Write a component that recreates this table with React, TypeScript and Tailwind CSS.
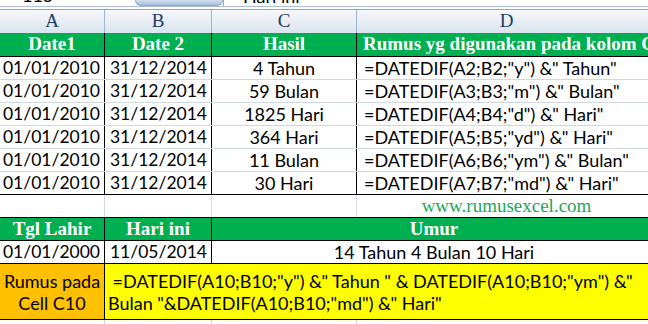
import React from "react";

const sans = "font-['Lato','Open_Sans',sans-serif]";
const serif = "font-['Liberation_Serif','DejaVu_Serif',serif]";

const rows = [
  ["4 Tahun", '=DATEDIF(A2;B2;"y") &" Tahun"'],
  ["59 Bulan", '=DATEDIF(A3;B3;"m") &" Bulan"'],
  ["1825 Hari", '=DATEDIF(A4;B4;"d") &" Hari"'],
  ["364 Hari", '=DATEDIF(A5;B5;"yd") &" Hari"'],
  ["11 Bulan", '=DATEDIF(A6;B6;"ym") &" Bulan"'],
  ["30 Hari", '=DATEDIF(A7;B7;"md") &" Hari"'],
];

export default function App() {
  return (
    <div className="h-[324px] w-[648px] overflow-hidden bg-white text-black">
      {/* formula bar remnant */}
      <div className="relative h-[10px] overflow-hidden">
        <span className={`absolute left-[22px] top-[-18px] text-[18px] ${sans}`}>115</span>
        <div className="absolute left-[135px] top-0 h-[6px] w-[88px] rounded-b-[9px] border border-t-0 border-[#8ea7c8] bg-gradient-to-b from-[#d3dfee] to-[#a9c0de]" />
        <div className="absolute left-[223px] top-0 h-[6px] w-px bg-[#8ea7c8]" />
        <span className={`absolute left-[243px] top-[-17px] text-[18px] ${sans}`}>Hari ini</span>
        <div className="absolute left-0 top-[6px] h-px w-full bg-[#a9bfda]" />
        <div className="absolute left-0 top-[9px] h-px w-full bg-[#8fa7c6]" />
      </div>

      {/* column letters */}
      <div className={`flex h-[23px] bg-gradient-to-b from-[#f6f8fb] to-[#dae3ee] text-[19px] text-[#233d5e] ${serif}`}>
        <div className="flex w-[105px] shrink-0 items-center justify-center border-r border-[#9db4cf]">A</div>
        <div className="flex w-[107px] shrink-0 items-center justify-center border-r border-[#9db4cf]">B</div>
        <div className="flex w-[145px] shrink-0 items-center justify-center border-r border-[#9db4cf]">C</div>
        <div className="flex w-[299px] shrink-0 items-center justify-center">D</div>
      </div>

      {/* table 1 header */}
      <div className={`flex h-[24px] border-b border-black bg-[#00b050] text-[19px] font-bold text-white ${serif}`}>
        <div className="flex w-[105px] shrink-0 items-center justify-center border-r border-black">Date1</div>
        <div className="flex w-[107px] shrink-0 items-center justify-center border-r border-black">Date 2</div>
        <div className="flex w-[145px] shrink-0 items-center justify-center border-r border-black">Hasil</div>
        <div className="flex w-[299px] shrink-0 items-center overflow-hidden whitespace-nowrap pl-[6px]">
          Rumus yg digunakan pada kolom C
        </div>
      </div>

      {rows.map(([hasil, rumus], i) => (
        <div
          key={i}
          className={`flex h-[23px] border-b text-[18px] ${sans} ${i === rows.length - 1 ? "border-black" : "border-[#d0d7e5]"}`}
        >
          <div className="flex w-[105px] shrink-0 items-center justify-end border-r border-black pr-[4px] text-[17.5px]">01/01/2010</div>
          <div className="flex w-[107px] shrink-0 items-center justify-end border-r border-black pr-[4px] text-[17.5px]">31/12/2014</div>
          <div className="flex w-[145px] shrink-0 items-center justify-center border-r border-black">{hasil}</div>
          <div className="flex w-[299px] shrink-0 items-center whitespace-nowrap pl-[7px]">{rumus}</div>
        </div>
      ))}

      {/* blank row with website */}
      <div className="flex h-[23px] border-b border-black">
        <div className="w-[105px] shrink-0 border-r border-[#d0d7e5]" />
        <div className="w-[107px] shrink-0 border-r border-[#d0d7e5]" />
        <div className="w-[145px] shrink-0 border-r border-[#d0d7e5]" />
        <div className={`flex w-[299px] shrink-0 items-center justify-center text-[19px] text-[#1aa85a] ${serif}`}>
          www.rumusexcel.com
        </div>
      </div>

      {/* table 2 header */}
      <div className={`flex h-[23px] border-b border-black bg-[#00b050] text-[19px] font-bold text-white ${serif}`}>
        <div className="flex w-[105px] shrink-0 items-center justify-center border-r border-black">Tgl Lahir</div>
        <div className="flex w-[107px] shrink-0 items-center justify-center border-r border-black">Hari ini</div>
        <div className="flex w-[444px] shrink-0 items-center justify-center">Umur</div>
      </div>

      <div className={`flex h-[23px] border-b border-black text-[18px] ${sans}`}>
        <div className="flex w-[105px] shrink-0 items-center justify-end border-r border-black pr-[4px] text-[17.5px]">01/01/2000</div>
        <div className="flex w-[107px] shrink-0 items-center justify-end border-r border-black pr-[4px] text-[17.5px]">11/05/2014</div>
        <div className="flex w-[444px] shrink-0 items-center justify-center">14 Tahun 4 Bulan 10 Hari</div>
      </div>

      <div className={`flex h-[56px] border-b border-black text-[18px] leading-[22px] ${sans}`}>
        <div className="flex w-[105px] shrink-0 flex-col items-center justify-center border-r border-black bg-[#ffc000]">
          <span>Rumus pada</span>
          <span>Cell C10</span>
        </div>
        <div className="flex w-[551px] shrink-0 flex-col justify-center whitespace-pre bg-[#ffff00] pl-[3px]">
          <span>{' =DATEDIF(A10;B10;"y") &" Tahun " & DATEDIF(A10;B10;"ym") &"'}</span>
          <span>{'Bulan "&DATEDIF(A10;B10;"md") &" Hari"'}</span>
        </div>
      </div>

      <div className="flex h-[10px]">
        <div className="w-[105px] shrink-0 border-r border-[#d0d7e5]" />
        <div className="w-[107px] shrink-0 border-r border-[#d0d7e5]" />
        <div className="w-[145px] shrink-0 border-r border-[#d0d7e5]" />
        <div className="w-[299px] shrink-0" />
      </div>
    </div>
  );
}
